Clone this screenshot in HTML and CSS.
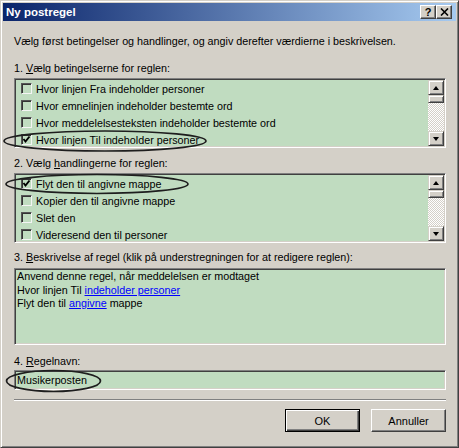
FILE: index.html
```html
<!DOCTYPE html>
<html lang="da">
<head>
    <meta charset="UTF-8">
    <title>Ny postregel</title>
    <link rel="stylesheet" href="styles.css">
</head>
<body>
    <div class="window">
        <div class="titlebar">
            <span class="title">Ny postregel</span>
            <div class="caption-buttons">
                <span class="cap-btn help">?</span>
                <span class="cap-btn close">
                    <svg width="9" height="8" viewBox="0 0 9 8"><path d="M1 0.5 L8 7.5 M8 0.5 L1 7.5" stroke="#000" stroke-width="1.6"/></svg>
                </span>
            </div>
        </div>

        <div class="content">
            <div class="intro">Vælg først betingelser og handlinger, og angiv derefter værdierne i beskrivelsen.</div>

            <div class="label first">1. <u>V</u>ælg betingelserne for reglen:</div>
            <div class="listbox sunken">
                <ul class="items">
                    <li><span class="check"></span>Hvor linjen Fra indeholder personer</li>
                    <li><span class="check"></span>Hvor emnelinjen indeholder bestemte ord</li>
                    <li><span class="check"></span>Hvor meddelelsesteksten indeholder bestemte ord</li>
                    <li><span class="check checked"><svg width="9" height="9" viewBox="0 0 9 9"><path d="M1.5 4 L3.5 6.5 L7.5 1.5" fill="none" stroke="#000" stroke-width="1.9"/></svg></span>Hvor linjen Til indeholder personer</li>
                </ul>
                <div class="scrollbar">
                    <span class="sb-btn"><span class="arrow up"></span></span>
                    <span class="sb-thumb"></span>
                    <span class="sb-track"></span>
                    <span class="sb-btn"><span class="arrow down"></span></span>
                </div>
            </div>

            <div class="label second">2. Vælg <u>h</u>andlingerne for reglen:</div>
            <div class="listbox sunken">
                <ul class="items">
                    <li><span class="check checked"><svg width="9" height="9" viewBox="0 0 9 9"><path d="M1.5 4 L3.5 6.5 L7.5 1.5" fill="none" stroke="#000" stroke-width="1.9"/></svg></span>Flyt den til angivne mappe</li>
                    <li><span class="check"></span>Kopier den til angivne mappe</li>
                    <li><span class="check"></span>Slet den</li>
                    <li><span class="check"></span>Videresend den til personer</li>
                </ul>
                <div class="scrollbar">
                    <span class="sb-btn"><span class="arrow up"></span></span>
                    <span class="sb-thumb"></span>
                    <span class="sb-track"></span>
                    <span class="sb-btn"><span class="arrow down"></span></span>
                </div>
            </div>

            <div class="label third">3. <u>B</u>eskrivelse af regel (klik på understregningen for at redigere reglen):</div>
            <div class="description sunken">
                <div>Anvend denne regel, når meddelelsen er modtaget</div>
                <div>Hvor linjen Til <a href="#">indeholder personer</a></div>
                <div>Flyt den til <a href="#">angivne</a> mappe</div>
            </div>

            <div class="label fourth">4. <u>R</u>egelnavn:</div>
            <div class="name-field sunken">Musikerposten</div>

            <div class="separator"></div>

            <div class="buttons">
                <button class="btn default">OK</button>
                <button class="btn">Annuller</button>
            </div>
        </div>

        <svg class="marks" width="459" height="448">
            <ellipse cx="105" cy="141" rx="101" ry="10" />
            <ellipse cx="97" cy="184" rx="91" ry="9.5" />
            <ellipse cx="53.5" cy="381" rx="47" ry="10.5" />
        </svg>
    </div>
</body>
</html>
```

FILE: styles.css
```css
body {
    margin: 0;
    font-family: "Liberation Sans", Arial, sans-serif;
    font-size: 10.75px;
    color: #000;
}
.window {
    position: relative;
    width: 459px;
    height: 448px;
    box-sizing: border-box;
    background-color: #d4d0c8;
    border: 1px solid;
    border-color: #d4d0c8 #404040 #404040 #d4d0c8;
    box-shadow: inset 1px 1px #fff, inset -1px -1px #808080;
    padding: 2px;
}
.titlebar {
    height: 18px;
    background: linear-gradient(to right, #0a246a, #a6caf0);
    display: flex;
    align-items: center;
    justify-content: space-between;
    padding: 0 4px 0 3px;
}
.title {
    color: #fff;
    font-weight: bold;
    font-size: 11.5px;
}
.caption-buttons {
    display: flex;
}
.cap-btn {
    width: 14px;
    height: 12px;
    background-color: #d4d0c8;
    border: 1px solid;
    border-color: #fff #404040 #404040 #fff;
    box-shadow: inset -1px -1px #808080;
    display: flex;
    align-items: center;
    justify-content: center;
    font-weight: bold;
    font-size: 11px;
    line-height: 12px;
}
.content {
    padding: 14px 10px 0 11px;
}
.intro,
.label {
    line-height: 13px;
    height: 13px;
    white-space: nowrap;
}
.label.first {
    margin-top: 14px;
    margin-bottom: 3px;
}
.label.second {
    margin-top: 9px;
    margin-bottom: 3px;
}
.label.third {
    margin-top: 8px;
    margin-bottom: 4px;
}
.label.fourth {
    margin-top: 10px;
    margin-bottom: 2px;
}
.sunken {
    box-sizing: border-box;
    background-color: #c0dcc0;
    border: 1px solid;
    border-color: #808080 #fff #fff #808080;
    box-shadow: inset 1px 1px #404040, inset -1px -1px #d4d0c8;
    padding: 1px;
}
.listbox {
    height: 70px;
    display: flex;
}
.items {
    flex: 1;
    list-style: none;
    margin: 0;
    padding: 0;
    overflow: hidden;
}
.items li {
    height: 17px;
    display: flex;
    align-items: center;
    padding-left: 5px;
    white-space: nowrap;
}
.check {
    width: 11px;
    height: 11px;
    box-sizing: border-box;
    border: 1px solid;
    border-color: #555 #f4f4f4 #f4f4f4 #555;
    box-shadow: inset 1px 1px #333;
    margin-right: 4px;
    display: flex;
    align-items: center;
    justify-content: center;
}
.scrollbar {
    width: 16px;
    display: flex;
    flex-direction: column;
}
.sb-btn,
.sb-thumb {
    box-sizing: border-box;
    background-color: #d4d0c8;
    border: 1px solid;
    border-color: #d4d0c8 #404040 #404040 #d4d0c8;
    box-shadow: inset 1px 1px #fff, inset -1px -1px #808080;
    display: flex;
    align-items: center;
    justify-content: center;
}
.sb-btn {
    height: 15px;
}
.sb-thumb {
    height: 8px;
}
.sb-track {
    flex: 1;
    background: repeating-conic-gradient(#fff 0 25%, #d4d0c8 0 50%) 0 0 / 2px 2px;
}
.arrow {
    width: 0;
    height: 0;
    border-left: 3.5px solid transparent;
    border-right: 3.5px solid transparent;
}
.arrow.up {
    border-bottom: 4px solid #000;
}
.arrow.down {
    border-top: 4px solid #000;
}
.description {
    height: 77px;
    padding: 1px 2px;
    line-height: 13.5px;
}
.description a {
    color: #0000ff;
    text-decoration: underline;
}
.name-field {
    height: 20px;
    line-height: 16px;
    padding: 1px 2px;
}
.separator {
    margin-top: 9px;
    border-top: 1px solid #808080;
    border-bottom: 1px solid #fff;
}
.buttons {
    margin-top: 8px;
    display: flex;
    justify-content: flex-end;
    gap: 11px;
}
.btn {
    width: 75px;
    height: 23px;
    font-family: inherit;
    font-size: 11px;
    background-color: #d4d0c8;
    border: 1px solid;
    border-color: #fff #404040 #404040 #fff;
    box-shadow: inset -1px -1px #808080;
    padding: 0;
    color: #000;
}
.btn.default {
    border-color: #000;
    box-shadow: inset 1px 1px #fff, inset -1px -1px #404040, inset -2px -2px #808080;
}
.marks {
    position: absolute;
    left: -1px;
    top: -1px;
    pointer-events: none;
}
.marks ellipse {
    fill: none;
    stroke: #1e1e1e;
    stroke-width: 1.7;
}
```
